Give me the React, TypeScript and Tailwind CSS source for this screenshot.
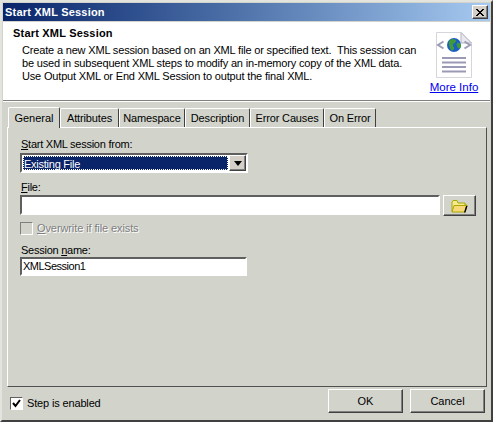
import type { ReactNode } from 'react';

const TABS = [
  { label: 'Attributes', width: 'w-[59px]' },
  { label: 'Namespace', width: 'w-[66px]' },
  { label: 'Description', width: 'w-[65px]' },
  { label: 'Error Causes', width: 'w-[74px]' },
  { label: 'On Error', width: 'w-[52px]' },
];

const raised = 'border border-t-white border-l-white border-r-[#404040] border-b-[#404040] shadow-[inset_-1px_-1px_0_#808080]';
const sunken = 'border-2 border-t-[#5f5f5f] border-l-[#5f5f5f] border-r-white border-b-white bg-white';

function Label({ children }: { children: ReactNode }) {
  return <div className="ml-px h-[14px] text-[11px] leading-[14px] tracking-[-0.25px] text-black">{children}</div>;
}

function DocIcon() {
  return (
    <svg width="38" height="48" viewBox="0 0 38 48">
      <path d="M1.5 1.5H26L36.5 12V46.5H1.5Z" fill="#fff" stroke="#d5d5dc" />
      <path d="M26 1.5V12H36.5Z" fill="#e8e8ee" stroke="#b5b5c0" />
      <circle cx="19" cy="14" r="7" fill="#1c5fc4" />
      <path d="M15 9c3-2 6-1 6 1s-3 2-3 4 2 2 1 4-3 2-4-1-2-6 0-8Z" fill="#3f9a3c" />
      <path d="M22 12c2-1 4 1 4 3s-2 3-3 2-2-4-1-5Z" fill="#3f9a3c" />
      <path d="M8.5 10.5 3 14l5.5 3.5M29.5 10.5 35 14l-5.5 3.5" fill="none" stroke="#9c9cb8" strokeWidth="2" />
      <path d="M7 27h24M7 31.5h24M7 36h24M7 40.5h24" stroke="#9a9ab6" strokeWidth="2" />
    </svg>
  );
}

function FolderIcon() {
  return (
    <svg width="17" height="14" viewBox="0 0 17 14">
      <path d="M1 3V12.5H14L16 6H14V4H7L6 1.5H2Z" fill="#f7e98e" stroke="#a8a800" />
      <path d="M3 6.5H16L14 13H1Z" fill="#f8d878" stroke="#a8a800" />
      <path d="M15 7h1.5L14.5 13.5H13Z" fill="#000" />
    </svg>
  );
}

export default function App() {
  return (
    <div
      className="flex h-[422px] w-[493px] flex-col overflow-hidden border-2 border-t-[#e4e4de] border-l-[#e4e4de] border-r-[#404040] border-b-[#404040] bg-[#d2d4cc] p-px text-black"
      style={{ fontFamily: '"Liberation Sans", Arial, sans-serif' }}
    >
      {/* Title bar */}
      <div className="flex h-[18px] shrink-0 items-center justify-between bg-gradient-to-r from-[#0a246a] to-[#a6caf0] pl-[2px] pr-[2px]">
        <span className="text-[11px] font-bold leading-none tracking-[0.2px] text-white">Start XML Session</span>
        <button className={`flex h-[14px] w-[16px] items-center justify-center bg-[#d4d0c8] ${raised}`}>
          <svg width="8" height="7" viewBox="0 0 8 7">
            <path d="M0 0 7 7M1 0 8 7M7 0 0 7M8 0 1 7" stroke="#000" strokeWidth="1" />
          </svg>
        </button>
      </div>

      {/* Header */}
      <div className="mt-px flex h-[78px] shrink-0 justify-between bg-white">
        <div className="pl-[10px] pt-[4px]">
          <div className="text-[11px] font-bold leading-[14px] tracking-[0.2px]">Start XML Session</div>
          <div className="pl-[9px] pt-[4px] text-[11px] leading-[13px] tracking-[-0.17px]">
            <div className="whitespace-pre">Create a new XML session based on an XML file or specified text.  This session can</div>
            <div>be used in subsequent XML steps to modify an in-memory copy of the XML data.</div>
            <div>Use Output XML or End XML Session to output the final XML.</div>
          </div>
        </div>
        <div className="flex w-[72px] shrink-0 flex-col items-center pt-[9px]">
          <DocIcon />
          <a className="mt-[1px] whitespace-nowrap text-[11.5px] leading-[14px] text-[#0000ee] underline">More Info</a>
        </div>
      </div>
      <div className="h-[2px] shrink-0 border-t border-b border-t-[#808080] border-b-white" />

      {/* Tabs */}
      <div className="mt-[5px] flex h-[20px] shrink-0 items-end pl-[5px]">
        <div className="z-10 -mb-px flex h-[21px] w-[52px] items-center justify-center rounded-t-[2px] border border-b-0 border-t-white border-l-white border-r-[#404040] bg-[#d2d4cc] text-[11px]">
          General
        </div>
        {TABS.map((tab) => (
          <div
            key={tab.label}
            className={`${tab.width} flex h-[19px] shrink-0 items-center justify-center rounded-t-[2px] border border-b-0 border-t-white border-l-white border-r-[#404040] pt-px text-[11px] tracking-[-0.15px]`}
          >
            {tab.label}
          </div>
        ))}
      </div>

      {/* Panel */}
      <div className="ml-[4px] mr-[3px] flex h-[260px] shrink-0 flex-col border border-t-white border-l-white border-r-[#505050] border-b-[#505050] pl-[12px] pr-[8px] pt-[9px]">
        <Label>
          <u>S</u>tart XML session from:
        </Label>
        <div className={`mt-[2px] flex h-[20px] w-[228px] ${sunken}`}>
          <div className="m-px flex-1 border border-dotted border-white bg-[#0a246a] text-[11px] leading-[14px] tracking-[-0.25px] text-white">Existing File</div>
          <div className={`flex w-[17px] items-center justify-center bg-[#d4d0c8] ${raised}`}>
            <div className="h-0 w-0 border-x-[4px] border-t-[5px] border-x-transparent border-t-black" />
          </div>
        </div>

        <div className="mt-[7px]">
          <Label>
            <u>F</u>ile:
          </Label>
        </div>
        <div className="mt-[1px] flex items-start gap-[3px]">
          <div className={`h-[20px] w-[420px] ${sunken}`} />
          <button className={`flex h-[21px] w-[33px] items-center justify-center bg-[#d2d4cc] ${raised}`}>
            <FolderIcon />
          </button>
        </div>

        <div className="mt-[5px] flex items-center gap-[4px]">
          <div className="h-[13px] w-[13px] border border-t-[#808080] border-l-[#808080] border-r-white border-b-white" />
          <span className="text-[11px] leading-[14px] tracking-[-0.1px] text-[#808080] [text-shadow:1px_1px_0_#fff]">
            <u>O</u>verwrite if file exists
          </span>
        </div>

        <div className="mt-[8px]">
          <Label>
            Session <u>n</u>ame:
          </Label>
        </div>
        <div className={`h-[19px] w-[227px] pl-px text-[11px] leading-[15px] tracking-[-0.5px] ${sunken}`}>XMLSession1</div>
      </div>

      {/* Footer */}
      <div className="flex flex-1 items-start justify-between pl-[7px] pr-[5px] pt-[2px]">
        <div className="mt-[7px] flex items-center gap-[4px]">
          <div className="flex h-[13px] w-[13px] items-center justify-center border border-t-[#5f5f5f] border-l-[#5f5f5f] border-r-white border-b-white bg-white">
            <svg width="9" height="9" viewBox="0 0 9 9">
              <path d="M1 4 3.5 7 8 1" fill="none" stroke="#000" strokeWidth="2" />
            </svg>
          </div>
          <span className="text-[11px] leading-[14px] tracking-[-0.15px]">Step is enabled</span>
        </div>
        <div className="flex gap-[7px]">
          <button className={`h-[24px] w-[75px] text-[11px] ${raised}`}>OK</button>
          <button className={`h-[24px] w-[75px] text-[11px] ${raised}`}>Cancel</button>
        </div>
      </div>
    </div>
  );
}
